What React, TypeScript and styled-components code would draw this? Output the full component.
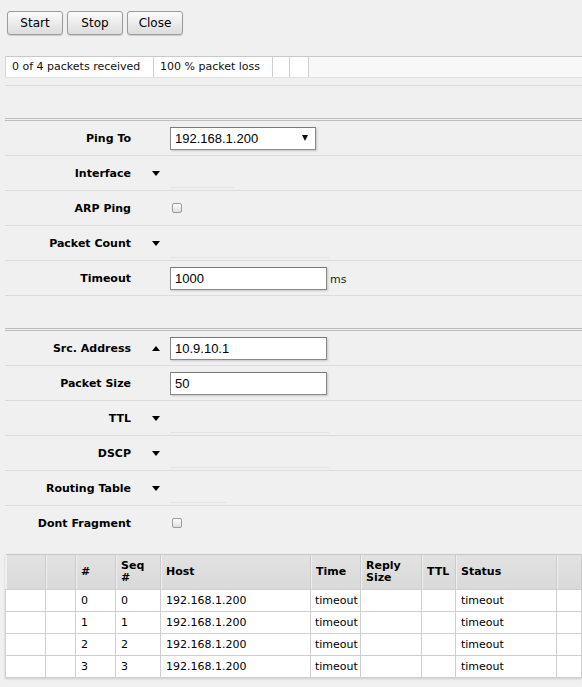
import styled, { createGlobalStyle } from 'styled-components';

const GlobalStyle = createGlobalStyle`
  html, body {
    margin: 0;
    padding: 0;
    background: #f0f0f0;
    overflow: hidden;
  }
  body {
    font-family: 'DejaVu Sans', Verdana, sans-serif;
    font-size: 11px;
    color: #000;
  }
`;

const Page = styled.div`
  width: 582px;
  height: 687px;
  padding: 11px 0 0 5px;
  box-sizing: border-box;
  overflow: hidden;
`;

const Toolbar = styled.div`
  display: flex;
  gap: 4px;
  padding-left: 2px;
`;

const Button = styled.button`
  width: 56px;
  height: 24px;
  padding: 0;
  font-family: 'DejaVu Sans', Verdana, sans-serif;
  font-size: 12px;
  color: #000;
  background: linear-gradient(#fbfbfb, #dcdcdc);
  border: 1px solid #9c9c9c;
  border-radius: 3px;
  box-shadow: 0 1px 1px rgba(0, 0, 0, 0.15);
`;

const StatusBar = styled.div`
  display: flex;
  height: 22px;
  margin-top: 21px;
  box-sizing: border-box;
  border-top: 1px solid #c8c8c8;
  border-left: 1px solid #d4d4d4;
  border-bottom: 1px solid #e2e2e2;
  background: #f8f8f8;
`;

const StatusCell = styled.div<{ $w?: number }>`
  ${(p) => (p.$w ? `width: ${p.$w}px;` : 'flex: 1;')}
  flex-shrink: 0;
  box-sizing: border-box;
  padding-left: 6px;
  line-height: 20px;
  white-space: nowrap;
  color: #111;
  background: ${(p) => (p.$w ? '#fff' : '#f8f8f8')};
  border-right: ${(p) => (p.$w ? '1px solid #cfcfcf' : 'none')};
`;

const Divider = styled.div`
  margin-top: 7px;
  border-top: 1px solid #dcdcdc;
`;

const Gap = styled.div`
  height: 32px;
`;

const Section = styled.div`
  border-top: 3px double #bdbdbd;
`;

const Row = styled.div<{ $last?: boolean }>`
  display: flex;
  align-items: center;
  height: 34px;
  border-bottom: ${(p) => (p.$last ? '1px solid transparent' : '1px solid #dcdcdc')};
`;

const Label = styled.div`
  width: 126px;
  flex-shrink: 0;
  text-align: right;
  font-weight: bold;
  font-size: 11px;
`;

const Toggle = styled.div`
  width: 39px;
  height: 100%;
  flex-shrink: 0;
  display: flex;
  align-items: center;
  padding-left: 21px;
  box-sizing: border-box;
`;

const Arrow = styled.span<{ $up?: boolean }>`
  width: 0;
  height: 0;
  border-left: 4px solid transparent;
  border-right: 4px solid transparent;
  ${(p) => (p.$up ? 'border-bottom: 5px solid #000;' : 'border-top: 5px solid #000;')}
`;

const Field = styled.div`
  display: flex;
  align-items: center;
  height: 100%;
  flex: 1;
`;

const TextBox = styled.div<{ $w: number }>`
  width: ${(p) => p.$w}px;
  height: 23px;
  box-sizing: border-box;
  padding-left: 4px;
  display: flex;
  align-items: center;
  background: #fff;
  border: 1px solid #8a8a8a;
  border-top-color: #7a7a7a;
  box-shadow: 1px 1px 2px rgba(0, 0, 0, 0.18);
  font-family: 'Liberation Sans', Arial, sans-serif;
  font-size: 13px;
  color: #000;
`;

const SelectBox = styled(TextBox)`
  justify-content: space-between;
  padding-right: 7px;
`;

const SmallArrow = styled.span`
  width: 0;
  height: 0;
  border-left: 3px solid transparent;
  border-right: 3px solid transparent;
  border-top: 6px solid #111;
`;

const Unit = styled.span`
  margin-left: 3px;
  margin-top: 3px;
  font-size: 11px;
  color: #222;
`;

const EmptyField = styled.div<{ $w: number }>`
  align-self: flex-end;
  width: ${(p) => p.$w}px;
  height: 10px;
  margin-bottom: 2px;
  border-bottom: 1px solid #e3e3e3;
`;

const Check = styled.span`
  width: 10px;
  height: 10px;
  margin-left: 2px;
  box-sizing: border-box;
  border: 1px solid #9a9a9a;
  border-radius: 2px;
  background: linear-gradient(#ffffff, #dedede);
`;

const Table = styled.table`
  width: 577px;
  margin-top: 13px;
  border-collapse: collapse;
  table-layout: fixed;
  box-shadow: 0 1px 2px rgba(0, 0, 0, 0.15);
`;

const Th = styled.th`
  height: 35px;
  padding: 0 5px;
  box-sizing: border-box;
  text-align: left;
  vertical-align: middle;
  font-weight: bold;
  font-size: 11px;
  line-height: 12px;
  background: linear-gradient(#e2e2e2, #d9d9d9);
  border-top: 1px solid #c8c8c8;
  border-right: 1px solid #cbcbcb;
  box-shadow: inset 1px 0 0 #efefef;
`;

const Td = styled.td`
  height: 22px;
  padding: 0 4px 0 5px;
  box-sizing: border-box;
  background: #fff;
  border: 1px solid #cfcfcf;
  border-left: none;
  font-size: 11px;
  white-space: nowrap;
  overflow: hidden;
  &:first-child {
    border-left: 1px solid #cfcfcf;
  }
`;

const cols = [40, 30, 40, 45, 150, 50, 61, 34, 101];
const rows = [0, 1, 2, 3];

export default function App() {
  return (
    <>
      <GlobalStyle />
      <Page>
        <Toolbar>
          <Button>Start</Button>
          <Button>Stop</Button>
          <Button>Close</Button>
        </Toolbar>

        <StatusBar>
          <StatusCell $w={148}>0 of 4 packets received</StatusCell>
          <StatusCell $w={119}>100 % packet loss</StatusCell>
          <StatusCell $w={17} />
          <StatusCell $w={19} />
          <StatusCell />
        </StatusBar>

        <Divider />
        <Gap />

        <Section>
          <Row>
            <Label>Ping To</Label>
            <Toggle />
            <Field>
              <SelectBox $w={146}>
                192.168.1.200
                <SmallArrow />
              </SelectBox>
            </Field>
          </Row>
          <Row>
            <Label>Interface</Label>
            <Toggle>
              <Arrow />
            </Toggle>
            <Field>
              <EmptyField $w={64} />
            </Field>
          </Row>
          <Row>
            <Label>ARP Ping</Label>
            <Toggle />
            <Field>
              <Check />
            </Field>
          </Row>
          <Row>
            <Label>Packet Count</Label>
            <Toggle>
              <Arrow />
            </Toggle>
            <Field>
              <EmptyField $w={159} />
            </Field>
          </Row>
          <Row>
            <Label>Timeout</Label>
            <Toggle />
            <Field>
              <TextBox $w={157}>1000</TextBox>
              <Unit>ms</Unit>
            </Field>
          </Row>
        </Section>

        <Gap />

        <Section>
          <Row>
            <Label>Src. Address</Label>
            <Toggle>
              <Arrow $up />
            </Toggle>
            <Field>
              <TextBox $w={157}>10.9.10.1</TextBox>
            </Field>
          </Row>
          <Row>
            <Label>Packet Size</Label>
            <Toggle />
            <Field>
              <TextBox $w={157}>50</TextBox>
            </Field>
          </Row>
          <Row>
            <Label>TTL</Label>
            <Toggle>
              <Arrow />
            </Toggle>
            <Field>
              <EmptyField $w={159} />
            </Field>
          </Row>
          <Row>
            <Label>DSCP</Label>
            <Toggle>
              <Arrow />
            </Toggle>
            <Field>
              <EmptyField $w={159} />
            </Field>
          </Row>
          <Row>
            <Label>Routing Table</Label>
            <Toggle>
              <Arrow />
            </Toggle>
            <Field>
              <EmptyField $w={56} />
            </Field>
          </Row>
          <Row $last>
            <Label>Dont Fragment</Label>
            <Toggle />
            <Field>
              <Check />
            </Field>
          </Row>
        </Section>

        <Table>
          <colgroup>
            {cols.map((w, i) => (
              <col key={i} style={{ width: w }} />
            ))}
            <col />
          </colgroup>
          <thead>
            <tr>
              <Th />
              <Th />
              <Th>#</Th>
              <Th>
                Seq
                <br />#
              </Th>
              <Th>Host</Th>
              <Th>Time</Th>
              <Th>
                Reply
                <br />
                Size
              </Th>
              <Th>TTL</Th>
              <Th>Status</Th>
              <Th />
            </tr>
          </thead>
          <tbody>
            {rows.map((n) => (
              <tr key={n}>
                <Td />
                <Td />
                <Td>{n}</Td>
                <Td>{n}</Td>
                <Td>192.168.1.200</Td>
                <Td style={{ paddingLeft: 4 }}>timeout</Td>
                <Td />
                <Td />
                <Td>timeout</Td>
                <Td />
              </tr>
            ))}
          </tbody>
        </Table>
      </Page>
    </>
  );
}
